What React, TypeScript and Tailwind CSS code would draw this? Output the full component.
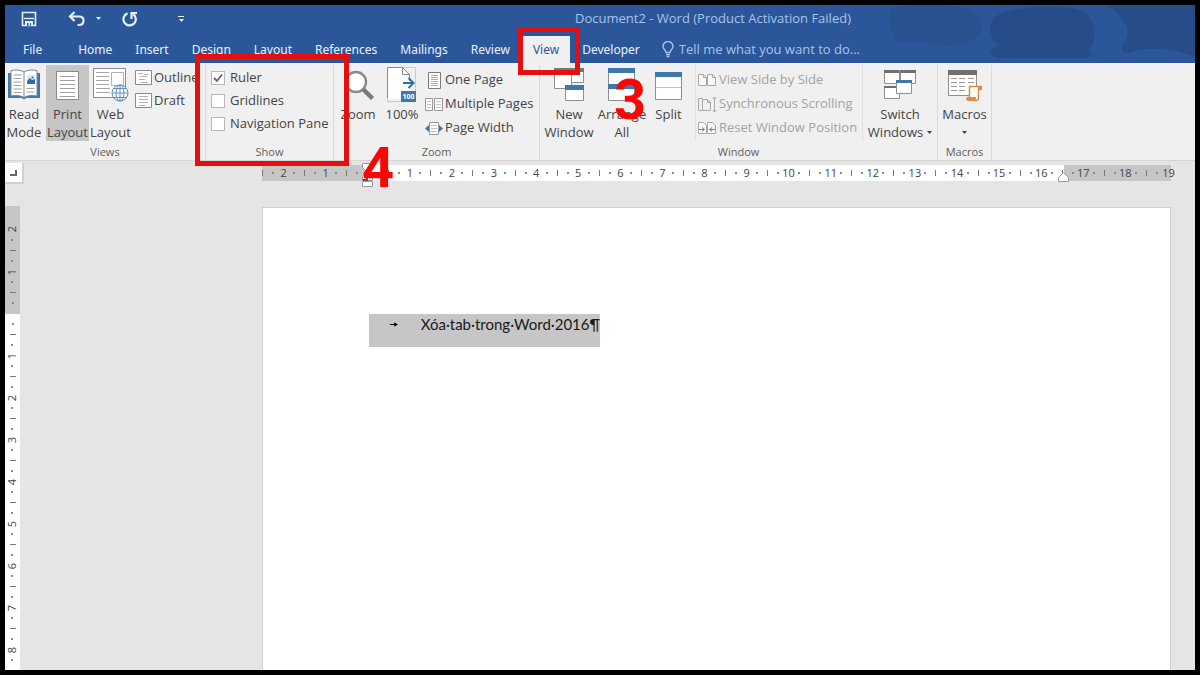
import type { ReactNode } from "react";
import clsx from "clsx";

const TABS = [
  "Home",
  "Insert",
  "Design",
  "Layout",
  "References",
  "Mailings",
  "Review",
  "View",
  "Developer",
];

const H_MARKS = [2, 1, 0, 1, 2, 3, 4, 5, 6, 7, 8, 9, 10, 11, 12, 13, 14, 15, 16, 17, 18, 19];
const V_MARKS = [2, 1, 0, 1, 2, 3, 4, 5, 6, 7, 8];

/* ---------- icons ---------- */

const SaveIcon = () => (
  <svg width="16" height="16" viewBox="0 0 16 16" fill="none" stroke="#e8f0fb">
    <path d="M1.500 1.500h13v13h-13z" strokeWidth="1.600" />
    <path d="M3 7.500h10" strokeWidth="1.400" />
    <path d="M4 10h8v5H4z" fill="#e8f0fb" stroke="none" />
    <path d="M6 12h1.500v3H6zM9 12h1v3H9z" fill="#2b579a" stroke="none" />
  </svg>
);

const UndoIcon = () => (
  <svg width="18" height="16" viewBox="0 0 18 16" fill="none" stroke="#e8f0fb" strokeWidth="2.200">
    <path d="M6.500 1 2 5.500 6.500 10" />
    <path d="M2 5.500h9c3 0 4.500 1.500 4.500 4s-1.500 4.500-4.500 4.500H9.500" />
  </svg>
);

const RedoIcon = () => (
  <svg width="16" height="16" viewBox="0 0 16 16" fill="none" stroke="#e8f0fb" strokeWidth="2.200">
    <path d="M5.500 2.400A6.200 6.200 0 1 0 11 3" />
    <path d="M9.500 8V2H15" />
  </svg>
);

const BulbIcon = () => (
  <svg width="12" height="17" viewBox="0 0 12 17" fill="none" stroke="#a9c2ea" strokeWidth="1.400">
    <path d="M4 11.500C4 9 1 8.500 1 5.500a5 5 0 0 1 10 0c0 3-3 3.500-3 6z" />
    <path d="M4 13.500h4M4.500 15.500h3" />
  </svg>
);

const Caret = () => (
  <svg width="5" height="3" viewBox="0 0 5 3" fill="currentColor">
    <path d="M0 0h5L2.500 3z" />
  </svg>
);

const ReadModeIcon = () => (
  <svg width="34" height="32" viewBox="0 0 34 32" fill="none">
    <path d="M1 4h32v25H19l-2 1.500L15 29H1z" fill="#3f78ad" />
    <path d="M4 1.500c5-1 10-.5 13 1.500 3-2 8-2.500 13-1.500V27c-5-1-10-.5-13 1.500C14 26.500 9 26 4 27z" fill="#fff" stroke="#7d8790" />
    <path d="M17 3v25" stroke="#7d8790" />
    <path d="M6.500 6h8M6.500 9.500h8M6.500 13h8M6.500 16.500h8M6.500 20h8M6.500 23.500h8M19.500 19.500h8M19.500 23h8" stroke="#a0a0a0" />
    <path d="M20 6h8v9h-8z" fill="#dceaf5" />
    <path d="M20 15v-3l3-3 2 2 3-1v5z" fill="#2f6ea5" />
    <circle cx="25.500" cy="8.500" r="1" fill="#2f6ea5" />
  </svg>
);

const PrintLayoutIcon = () => (
  <svg width="24" height="32" viewBox="0 0 24 32" fill="none">
    <path d="M.5 2.500h22v28H.5z" fill="#fff" stroke="#8a8a8a" />
    <path d="M4 7.500h15M4 11.500h15M4 15.500h15M4 19.500h15M4 23.500h15M4 27.500h15" stroke="#a0a0a0" />
  </svg>
);

const WebLayoutIcon = () => (
  <svg width="36" height="34" viewBox="0 0 36 34" fill="none">
    <path d="M.5.5h32v29H.5z" fill="#fff" stroke="#8a8a8a" />
    <path d="M3 4.500h13M3 8.500h13M3 12.500h13M3 16.500h13M3 20.500h14M3 24.500h14" stroke="#a8a8a8" />
    <path d="M18.500 4.500h12v13h-12z" fill="#fff" stroke="#b0b0b0" />
    <circle cx="27" cy="25" r="8" fill="#fff" stroke="#5e8fbe" />
    <path d="M19 25h16M27 17v16M20.500 20.500h13M20.500 29.500h13" stroke="#5e8fbe" />
    <ellipse cx="27" cy="25" rx="4" ry="8" stroke="#5e8fbe" />
  </svg>
);

const OutlineIcon = () => (
  <svg width="17" height="15" viewBox="0 0 17 15" fill="none">
    <path d="M.5.5h16v14H.5z" fill="#fff" stroke="#8a8a8a" />
    <path d="M3 3.500h5M5 6.500h7M9 4.500h4M4 9.500h6M6 12.500h7" stroke="#b0b0b0" />
  </svg>
);

const DraftIcon = () => (
  <svg width="17" height="15" viewBox="0 0 17 15" fill="none">
    <path d="M.5.500h16v14H.5z" fill="#fff" stroke="#8a8a8a" />
    <path d="M4 3.500h9M4 6.500h9M4 9.500h9M4 12.500h6" stroke="#b0b0b0" />
  </svg>
);

const MagnifierIcon = () => (
  <svg width="34" height="32" viewBox="0 0 34 32" fill="none">
    <circle cx="15" cy="13" r="10" fill="#fff" stroke="#8a8a8a" strokeWidth="2.400" />
    <path d="m22.500 20.500 9 9" stroke="#7a7a7a" strokeWidth="4.500" />
  </svg>
);

const HundredIcon = () => (
  <svg width="30" height="36" viewBox="0 0 30 36" fill="none">
    <path d="M.5.500h28v34H.5z" stroke="#a5a5a5" strokeDasharray="1 1" />
    <path d="M.5.500h15l7 7v24H.5z" fill="#fff" />
    <path d="M.5 31V.5h15l7 7V14M15.500.500v7h7" stroke="#8a8a8a" />
    <path d="M16 16h10M21.500 11l5 5-5 5" stroke="#2f6ea5" strokeWidth="2" />
    <path d="M14 24h15v11H14z" fill="#3f78ad" />
    <text x="21.500" y="32" textAnchor="middle" fill="#fff" className="font-['Noto_Sans'] text-[7px] font-bold">
      100
    </text>
  </svg>
);

const OnePageIcon = () => (
  <svg width="18" height="17" viewBox="0 0 18 17" fill="none">
    <path d="M3.500.500h12v16h-12z" fill="#fff" stroke="#7d7d7d" />
    <path d="M6 3.500h7M6 5.500h7M6 7.500h7M6 9.500h7M6 11.500h7M6 13.500h7" stroke="#b0b0b0" />
  </svg>
);

const MultiPageIcon = () => (
  <svg width="18" height="15" viewBox="0 0 18 15" fill="none">
    <path d="M.5 1.500h7v12h-7zM9.500 1.500h8v12h-8z" fill="#fff" stroke="#999" />
    <path d="M2 4.500h4M2 7.500h4M2 10.500h4M11 4.500h5M11 7.500h5M11 10.500h5" stroke="#c0c0c0" />
  </svg>
);

const PageWidthIcon = () => (
  <svg width="18" height="15" viewBox="0 0 18 15" fill="none">
    <path d="M4.500 1.500h9v12h-9z" fill="#fff" stroke="#999" />
    <path d="M6 4.500h6M6 7.500h6M6 10.500h6" stroke="#c0c0c0" />
    <path d="M4 4v7L0 7.500zM14 4v7l4-3.500z" fill="#3f78ad" />
  </svg>
);

const NewWindowIcon = () => (
  <svg width="32" height="34" viewBox="0 0 32 34" fill="none">
    <path d="M18.500.500h12v14h-12zM1.500.500h17v20h-17z" fill="#fff" stroke="#8f8f8f" />
    <path d="M1 0h30v4H1z" fill="#777" />
    <path d="M12.500 17.500h18v15h-18z" fill="#fff" stroke="#8f8f8f" />
    <path d="M12 17h19v5H12z" fill="#3f78ad" />
  </svg>
);

const ArrangeIcon = () => (
  <svg width="28" height="34" viewBox="0 0 28 34" fill="none">
    <path d="M.5.500h26v16H.5zM.5 16.500h26v16H.5z" fill="#fff" stroke="#8f8f8f" />
    <path d="M0 0h27v5H0zM0 16h27v5H0z" fill="#3f78ad" />
  </svg>
);

const SplitIcon = () => (
  <svg width="28" height="32" viewBox="0 0 28 32" fill="none">
    <path d="M.5 3.500h26v27H.5z" fill="#fff" stroke="#8f8f8f" />
    <path d="M0 3h27v5H0z" fill="#3f78ad" />
    <path d="M1 18.500h25" stroke="#b5c4d4" />
  </svg>
);

const SideBySideIcon = () => (
  <svg width="19" height="14" viewBox="0 0 19 14" fill="#f8f8f8" stroke="#a8a8a8">
    <path d="M.5 1.500h5l3 3v8h-8zM9.500 1.500h5l3 3v8h-8z" />
    <path d="M5.500 1.500v3h3M14.500 1.500v3h3" fill="none" />
  </svg>
);

const SyncScrollIcon = () => (
  <svg width="19" height="17" viewBox="0 0 19 17" fill="none" stroke="#a8a8a8">
    <path d="M4.500 2.500h-4v12h4M4.500 3.500h5l3 3v8h-8zM9.500 3.500v3h3" />
    <path d="M16.500 1v15M14.500 3l2-2 2 2M14.500 14l2 2 2-2" />
  </svg>
);

const ResetPositionIcon = () => (
  <svg width="19" height="14" viewBox="0 0 19 14" fill="#f8f8f8" stroke="#a8a8a8">
    <path d="M.5 1.500h5l3 3v8h-8zM9.500 1.500h5l3 3v8h-8z" />
    <path d="M1 8.500h5M4 6.500l2.500 2L4 10.500M17 8.500h-5M14 6.500l-2.500 2 2.500 2" fill="none" stroke="#7d7d7d" />
  </svg>
);

const SwitchWindowsIcon = () => (
  <svg width="34" height="30" viewBox="0 0 34 30" fill="none">
    <path d="M1.500.500h15v13h-15zM17.500.500h15v13h-15zM1.500 16.500h15v12h-15z" fill="#fff" stroke="#8f8f8f" />
    <path d="M1 0h15v3H1zM17 0h16v3H17zM1 16h16v2H1z" fill="#707070" />
    <path d="M13.500 10.500h15v13h-15z" fill="#fff" stroke="#8f8f8f" />
    <path d="M13 10h16v3H13z" fill="#3f78ad" />
  </svg>
);

const MacrosIcon = () => (
  <svg width="36" height="33" viewBox="0 0 36 33" fill="none">
    <path d="M1.500 1.500h28v25h-28z" fill="#fff" stroke="#8f8f8f" />
    <path d="M1 1h29v5H1z" fill="#707070" />
    <path d="M4 9.500h6M12 9.500h6M21 9.500h6M4 13.500h6M12 13.500h6M21 13.500h6M4 17.500h6M12 17.500h6M4 21.500h6M12 21.500h6" stroke="#9a9a9a" />
    <path d="M22.500 17.500h10v11c0 2-1 3-2 3h-8z" fill="#fff" />
    <path d="M22.500 28V17.500H33v3h-1.500v8c0 2-1 3-2 3H27" stroke="#e08a45" strokeWidth="1.500" />
    <path d="M31 17h4v4h-4zM20 28h9v4h-8c-2 0-2-4-1-4z" fill="#e08a45" />
  </svg>
);

/* ---------- ribbon parts ---------- */

function Group({ label, className, children }: { label: string; className: string; children: ReactNode }) {
  return (
    <section className={clsx("flex shrink-0 flex-col border-r border-[#dadada]", className)}>
      <div className="flex h-[76px] shrink-0">{children}</div>
      <h2 className="mt-[2px] text-center text-[11px] leading-[17px] text-[#5f5f5f]">{label}</h2>
    </section>
  );
}

function BigButton({ icon, lines, className, caret }: { icon: ReactNode; lines: string[]; className: string; caret?: boolean }) {
  return (
    <button type="button" className={clsx("flex shrink-0 flex-col items-center whitespace-nowrap", className)}>
      <span className="flex h-[40px] items-center justify-center">{icon}</span>
      {lines.map((line, i) => (
        <span key={i} className="flex h-[18px] items-center gap-1 leading-[18px]">
          {line}
          {caret && i === lines.length - 1 && <Caret />}
        </span>
      ))}
    </button>
  );
}

function SmallButton({ icon, label, disabled }: { icon: ReactNode; label: string; disabled?: boolean }) {
  return (
    <button
      type="button"
      disabled={disabled}
      className="flex h-6 items-center gap-[2px] whitespace-nowrap disabled:text-[#a3a3a3]"
    >
      {icon}
      {label}
    </button>
  );
}

function ShowOption({ label, checked }: { label: string; checked?: boolean }) {
  return (
    <label className="flex h-[23px] items-center gap-[5px] whitespace-nowrap">
      <span className="relative flex">
        <input
          type="checkbox"
          defaultChecked={checked}
          className="peer size-[14px] appearance-none border border-[#b8b8b8] bg-white"
        />
        <svg
          viewBox="0 0 14 14"
          className="pointer-events-none absolute inset-0 hidden size-[14px] peer-checked:block"
          fill="none"
          stroke="#666"
          strokeWidth="1.800"
        >
          <path d="m3 7 3 3 5-6.500" />
        </svg>
      </span>
      {label}
    </label>
  );
}

function Ribbon() {
  return (
    <div className="flex h-[98px] shrink-0 border-b border-[#d5d5d5] bg-[#f0f0f0] pt-[2px] text-[13px] text-[#444]">
      <Group label="Views" className="w-[201px]">
        <BigButton icon={<ReadModeIcon />} lines={["Read", "Mode"]} className="w-[38px]" />
        <BigButton icon={<PrintLayoutIcon />} lines={["Print", "Layout"]} className="ml-[3px] w-[43px] bg-[#c6c6c6]" />
        <BigButton icon={<WebLayoutIcon />} lines={["Web", "Layout"]} className="w-[43px]" />
        <div className="ml-[3px] pt-[1px]">
          <button type="button" className="flex h-[23px] items-center gap-[2px]">
            <OutlineIcon />
            Outline
          </button>
          <button type="button" className="flex h-[23px] items-center gap-[2px]">
            <DraftIcon />
            Draft
          </button>
        </div>
      </Group>

      <Group label="Show" className="w-[128px]">
        <div className="pt-[1px] pl-[5px]">
          <ShowOption label="Ruler" checked />
          <ShowOption label="Gridlines" />
          <ShowOption label="Navigation Pane" />
        </div>
      </Group>

      <Group label="Zoom" className="w-[206px]">
        <BigButton icon={<MagnifierIcon />} lines={["Zoom"]} className="w-[48px]" />
        <BigButton icon={<HundredIcon />} lines={["100%"]} className="w-[40px]" />
        <div className="pt-[3px] pl-[3px]">
          <SmallButton icon={<OnePageIcon />} label="One Page" />
          <SmallButton icon={<MultiPageIcon />} label="Multiple Pages" />
          <SmallButton icon={<PageWidthIcon />} label="Page Width" />
        </div>
      </Group>

      <Group label="Window" className="w-[398px]">
        <BigButton icon={<NewWindowIcon />} lines={["New", "Window"]} className="w-[58px]" />
        <BigButton icon={<ArrangeIcon />} lines={["Arrange", "All"]} className="w-[48px]" />
        <BigButton icon={<SplitIcon />} lines={["Split"]} className="w-[45px]" />
        <div className="ml-[4px] w-[168px] border-x border-[#e0e0e0] pt-[3px] pl-[2px]">
          <SmallButton icon={<SideBySideIcon />} label="View Side by Side" disabled />
          <SmallButton icon={<SyncScrollIcon />} label="Synchronous Scrolling" disabled />
          <SmallButton icon={<ResetPositionIcon />} label="Reset Window Position" disabled />
        </div>
        <BigButton icon={<SwitchWindowsIcon />} lines={["Switch", "Windows"]} className="flex-1" caret />
      </Group>

      <Group label="Macros" className="w-[54px]">
        <BigButton icon={<MacrosIcon />} lines={["Macros", ""]} className="w-full" caret />
      </Group>
    </div>
  );
}

/* ---------- rulers ---------- */

const Dot = () => <i className="size-[2px] bg-[#8a8a8a]" />;

function HorizontalRuler() {
  return (
    <div className="relative grid h-4 w-[926px] grid-cols-[repeat(22,1fr)] bg-[linear-gradient(90deg,#c6c6c6_105px,#fff_105px_802px,#c6c6c6_802px_909px,transparent_909px)]">
      {H_MARKS.map((n, i) => (
        <div key={i} className="flex items-center text-[11px] leading-4 text-[#444]">
          <i className="h-[6px] w-px bg-[#777]" />
          <span className="flex flex-1 items-center justify-between px-[9px]">
            <Dot />
            <span className="flex w-0 justify-center">{n || ""}</span>
            {i < H_MARKS.length - 1 ? <Dot /> : <i />}
          </span>
        </div>
      ))}
      <svg className="absolute top-[-2px] left-[100px]" width="11" height="25" viewBox="0 0 11 25" fill="#fff" stroke="#9a9a9a">
        <path d="M.5.500h10v4l-5 5-5-5zM.5 17.500v-4l5-4 5 4v4zM.5 18.500h10v5H.5z" />
        <path d="M1 17h4v-4" stroke="#555" strokeWidth="2" fill="none" />
      </svg>
      <svg className="absolute top-[7px] left-[796px]" width="11" height="11" viewBox="0 0 11 11" fill="#fff" stroke="#9a9a9a">
        <path d="M.5 9.500v-4l5-5 5 5v4z" />
      </svg>
    </div>
  );
}

function VerticalRuler() {
  return (
    <div className="min-h-0 w-[15px] flex-1 overflow-hidden bg-[linear-gradient(#c6c6c6_108px,#fff_108px)] pt-[2px]">
      {V_MARKS.map((n, i) => (
        <div key={i} className="flex h-[42px] flex-col items-center text-[11px] text-[#444]">
          <i className={clsx("h-px w-[6px]", i > 0 && "bg-[#777]")} />
          <span className="flex flex-1 flex-col items-center justify-between py-[9px]">
            {i > 0 ? <Dot /> : <i />}
            <span className="flex h-0 -rotate-90 items-center justify-center">{n || ""}</span>
            <Dot />
          </span>
        </div>
      ))}
    </div>
  );
}

/* ---------- window ---------- */

function Header() {
  return (
    <header className="relative shrink-0 bg-[#2b579a] font-['Noto_Sans',sans-serif] text-[12px] text-[#eaf1fb]">
      <svg className="absolute top-0 right-0" width="320" height="58" viewBox="0 0 320 58" fill="#254b85">
        <path d="M17 3c-4 10-4 20 4 27-4 4-2 7 4 7h28c12 5 40 4 48-4 10-6 8-24-6-28-20-8-60-6-78-2z" opacity=".5" />
        <path d="M120 12c15-12 70-14 88-6 12 8 16 28 6 40 8 6-2 8-12 7h-75c-16 0-14-10-4-12-8-8-12-20-3-29z" opacity=".8" />
        <path d="M232 0h88v52c-20-8-48-12-66-4-8 0-10-6-4-12 8-12-4-26-18-36z" opacity=".8" />
      </svg>

      <div className="relative flex h-[31px] items-center pb-[4px]">
        <div className="flex w-[226px] shrink-0 items-center pl-4">
          <button type="button" aria-label="Save"><SaveIcon /></button>
          <button type="button" aria-label="Undo" className="ml-[31px]"><UndoIcon /></button>
          <button type="button" aria-label="Undo history" className="ml-[10px]"><Caret /></button>
          <button type="button" aria-label="Redo" className="ml-[21px]"><RedoIcon /></button>
          <button type="button" aria-label="Customize toolbar" className="ml-10 flex flex-col items-center gap-[2px]">
            <i className="h-px w-[6px] bg-current" />
            <Caret />
          </button>
        </div>
        <h1 className="flex-1 text-center font-['Open_Sans',sans-serif] text-[13px] text-[#a9c2ea]">
          Document2 - Word (Product Activation Failed)
        </h1>
      </div>

      <nav className="relative flex h-[27px] items-stretch gap-px">
        <button type="button" className="mr-[13px] ml-[7px] px-[11px]">File</button>
        {TABS.map((tab) => (
          <button
            key={tab}
            type="button"
            className={clsx("px-[11px]", tab === "View" && "bg-[#f0f0f0] text-[#2b579a]")}
          >
            {tab}
          </button>
        ))}
        <label className="ml-[10px] flex flex-1 items-center gap-[5px]">
          <BulbIcon />
          <input
            type="text"
            aria-label="Tell me what you want to do"
            placeholder="Tell me what you want to do..."
            className="w-[220px] bg-transparent font-['Open_Sans',sans-serif] text-[13px] outline-none placeholder:text-[#a9c2ea]"
          />
        </label>
      </nav>
    </header>
  );
}

function Workspace() {
  return (
    <main className="flex min-h-0 flex-1 overflow-hidden bg-[#e5e5e5]">
      <div className="flex w-[19px] shrink-0 flex-col">
        <button
          type="button"
          aria-label="Tab selector"
          className="mt-[2px] mb-[22px] flex h-[21px] items-center justify-center border-r-2 border-b-2 border-[#d0d0d0] bg-white"
        >
          <svg width="8" height="8" viewBox="0 0 8 8" fill="none" stroke="#666" strokeWidth="2">
            <path d="M0 6h6V1" />
          </svg>
        </button>
        <VerticalRuler />
      </div>

      <div className="ml-[238px] flex flex-1 flex-col pt-[4px]">
        <HorizontalRuler />
        <article className="mt-[26px] w-[909px] flex-1 border border-b-0 border-[#d0d0d0] bg-white pt-[106px] pl-[106px]">
          <p className="flex h-[33px] w-[231px] bg-[#c6c6c6] pl-[21px] font-['Lato'] text-[15px] leading-[20px] whitespace-nowrap text-[#1a1a1a]">
            <svg className="mt-[7px] mr-[23px]" width="9" height="7" viewBox="0 0 9 7">
              <path d="M0 3h5V1l4 2.500L5 6V4H0z" />
            </svg>
            Xóa·tab·trong·Word·2016¶
          </p>
        </article>
      </div>
    </main>
  );
}

export default function App() {
  return (
    <div className="relative h-screen overflow-hidden bg-black p-[5px] font-['Open_Sans','Noto_Sans',sans-serif]">
      <div className="flex h-full flex-col overflow-hidden">
        <Header />
        <Ribbon />
        <Workspace />
      </div>

      {/* step callouts */}
      <div className="pointer-events-none absolute top-[54px] left-[195px] h-[112px] w-[154px] border-[5px] border-[#e60f0f]" />
      <div className="pointer-events-none absolute top-[27px] left-[518px] h-[48px] w-[62px] border-[5px] border-[#e60f0f]" />
      <span className="pointer-events-none absolute top-[72px] left-[614px] font-['Roboto',sans-serif] text-[56px] leading-[56px] font-bold text-[#fb0505]">
        3
      </span>
      <span className="pointer-events-none absolute top-[140px] left-[362px] font-['Roboto',sans-serif] text-[56px] leading-[56px] font-bold text-[#fb0505]">
        4
      </span>
    </div>
  );
}
